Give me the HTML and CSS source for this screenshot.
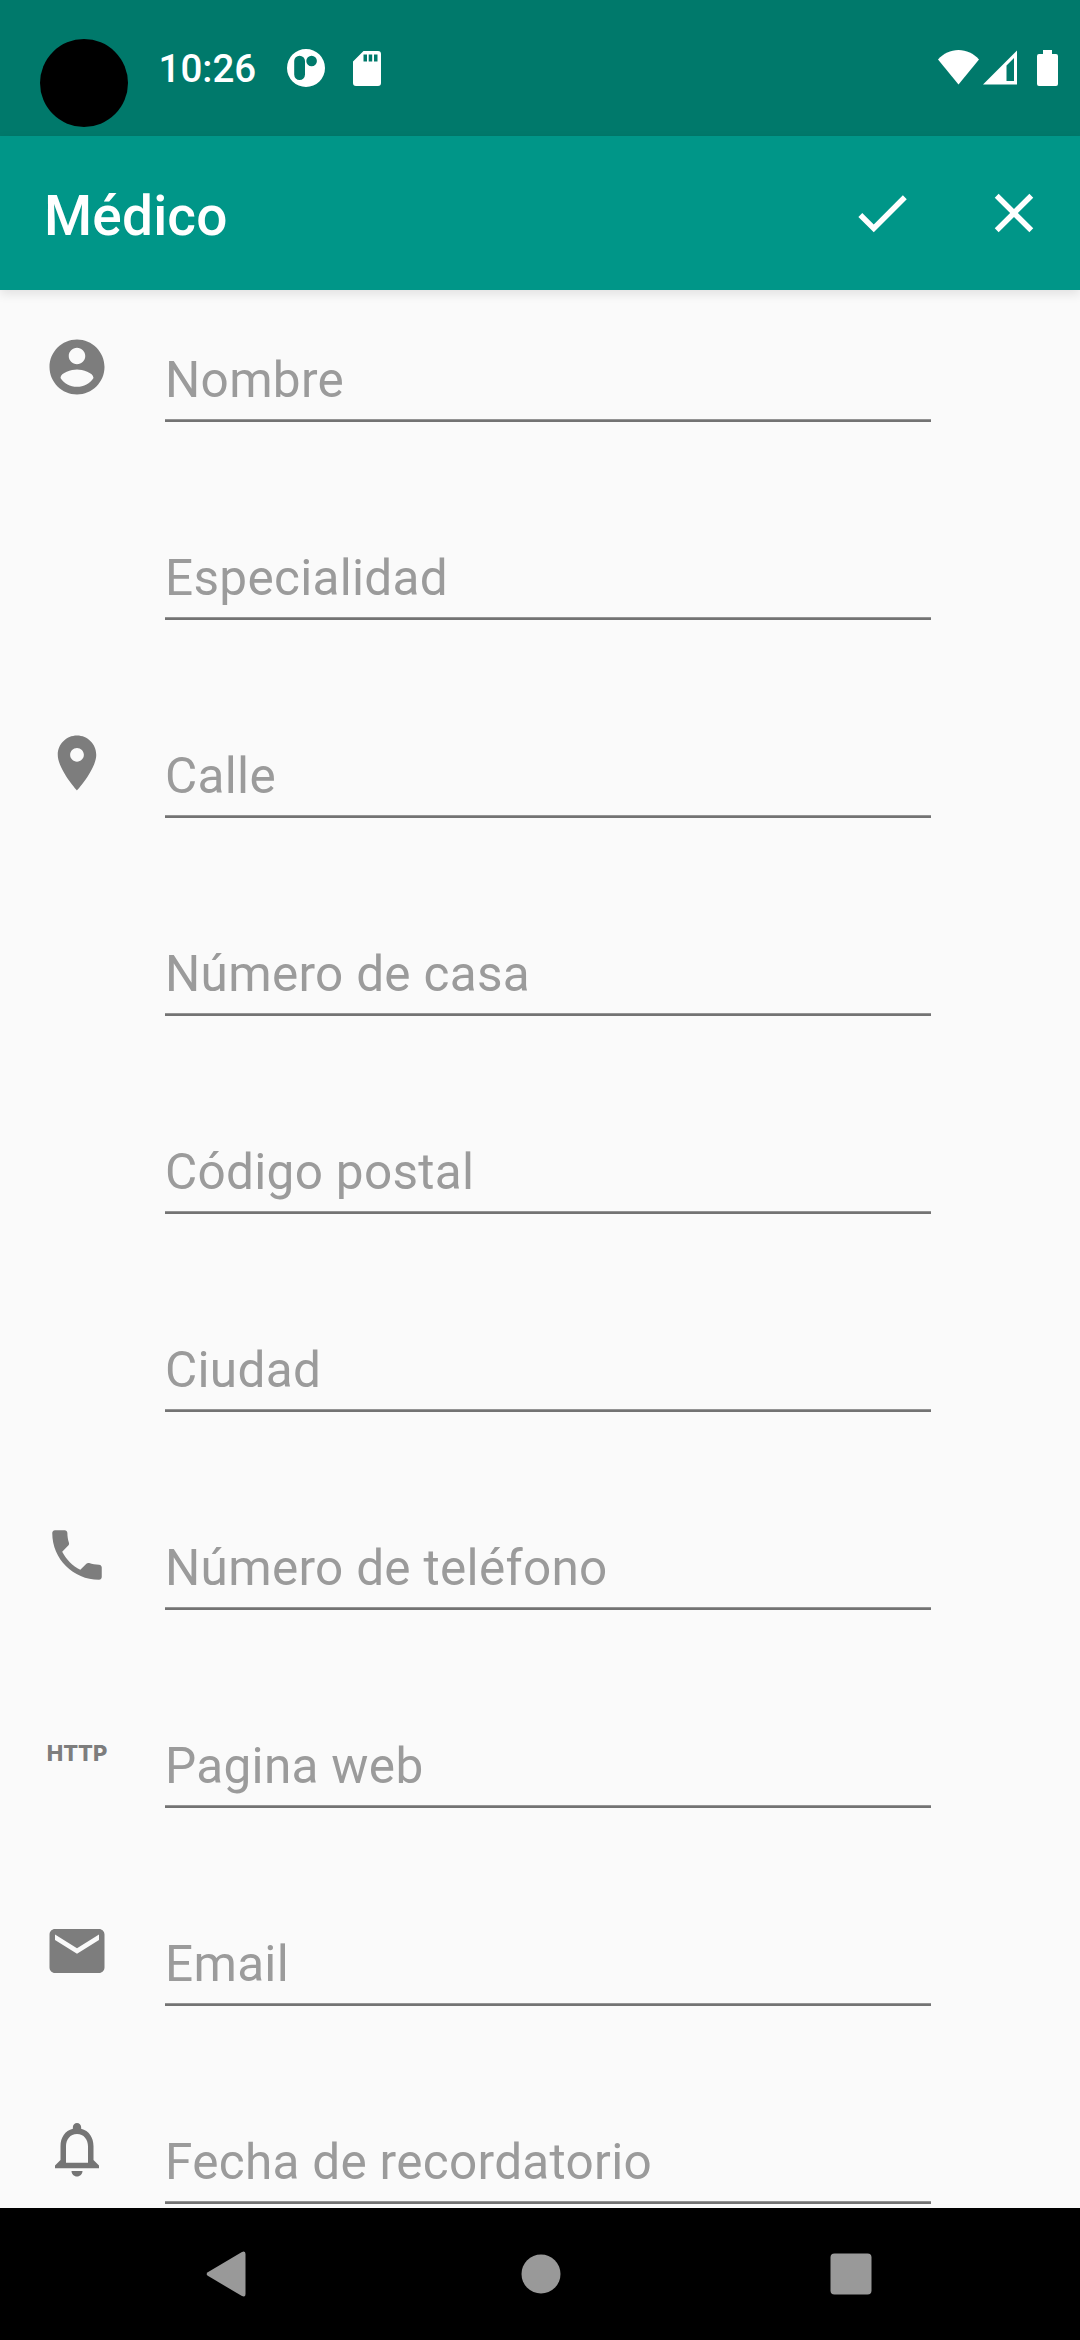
FILE: index.html
```html
<!DOCTYPE html>
<html lang="es">
<head>
<meta charset="utf-8">
<title>Médico</title>
<link rel="stylesheet" href="styles.css">
</head>
<body>
<div class="screen">
  <header class="status">
    <div class="camera"></div>
    <span class="clock">10:26</span>
    <svg class="s-app" width="38" height="38" viewBox="0 0 38 38"><path fill="#fff" fill-rule="evenodd" d="M19 0a19 19 0 1 0 0 38a19 19 0 1 0 0-38zM12.6 6.700a5.400 5.400 0 0 1 5.400 5.400v13.500a5.400 5.400 0 0 1-10.800 0v-13.500a5.400 5.400 0 0 1 5.400-5.400zM24.600 6.700a5.300 5.300 0 1 1 0 10.600a5.300 5.300 0 1 1 0-10.600z"/></svg>
    <svg class="s-sd" width="28" height="35" viewBox="0 0 28 35"><path fill="#fff" fill-rule="evenodd" d="M10.500 0H25a3 3 0 0 1 3 3V32a3 3 0 0 1-3 3H3a3 3 0 0 1-3-3V10.500zM10.500 3.500v7h3.500v-7zM15.700 3.500v7h3.500v-7zM21 3.500v7h3.500v-7z"/></svg>
    <span class="fill"></span>
    <svg class="s-wifi" width="41" height="35" viewBox="0 0 41 35"><path fill="#fff" d="M0 9.500C5.500 3.500 12.500 0 20.500 0S35.500 3.500 41 9.500L20.500 34.500z"/></svg>
    <svg class="s-cell" width="34" height="35" viewBox="0 0 34 35"><path fill="#fff" fill-rule="evenodd" d="M34 .5V34.500H0zM31 8L23.500 15.500V31H31z"/></svg>
    <svg class="s-batt" width="21" height="36" viewBox="0 0 21 36"><path fill="#fff" d="M6 0h9v4H19a2 2 0 0 1 2 2V34a2 2 0 0 1-2 2H2a2 2 0 0 1-2-2V6a2 2 0 0 1 2-2h4z"/></svg>
  </header>
  <div class="toolbar">
    <h1 class="title">Médico</h1>
    <svg class="action" viewBox="0 0 24 24"><path d="M9 16.170L4.830 12l-1.420 1.410L9 19 21 7l-1.410-1.410z"/></svg>
    <svg class="action" viewBox="0 0 24 24"><path d="M19 6.410L17.590 5 12 10.590 6.410 5 5 6.410 10.590 12 5 17.590 6.410 19 12 13.410 17.590 19 19 17.590 13.410 12z"/></svg>
  </div>
  <main class="form">
    <div class="row"><svg class="icon" viewBox="0 0 24 24"><path d="M12 2C6.480 2 2 6.480 2 12s4.480 10 10 10 10-4.480 10-10S17.520 2 12 2zm0 3c1.660 0 3 1.340 3 3s-1.340 3-3 3-3-1.340-3-3 1.340-3 3-3zm0 14.200c-2.500 0-4.710-1.280-6-3.220.030-1.990 4-3.080 6-3.080 1.990 0 5.970 1.090 6 3.080-1.290 1.940-3.500 3.220-6 3.220z"/></svg><div class="field"><span>Nombre</span></div></div>
    <div class="row"><span class="icon"></span><div class="field"><span>Especialidad</span></div></div>
    <div class="row"><svg class="icon" viewBox="0 0 24 24"><path d="M12 2C8.130 2 5 5.130 5 9c0 5.250 7 13 7 13s7-7.750 7-13c0-3.870-3.130-7-7-7zm0 9.500c-1.380 0-2.500-1.120-2.500-2.500s1.120-2.500 2.500-2.500 2.500 1.120 2.500 2.500-1.120 2.500-2.500 2.500z"/></svg><div class="field"><span>Calle</span></div></div>
    <div class="row"><span class="icon"></span><div class="field"><span>Número de casa</span></div></div>
    <div class="row"><span class="icon"></span><div class="field"><span>Código postal</span></div></div>
    <div class="row"><span class="icon"></span><div class="field"><span>Ciudad</span></div></div>
    <div class="row"><svg class="icon" viewBox="0 0 24 24"><path d="M6.620 10.790c1.440 2.830 3.760 5.140 6.590 6.590l2.200-2.200c.270-.270.670-.360 1.020-.240 1.120.370 2.330.570 3.570.570.550 0 1 .450 1 1V20c0 .550-.450 1-1 1-9.390 0-17-7.610-17-17 0-.550.450-1 1-1h3.500c.550 0 1 .450 1 1 0 1.250.200 2.450.570 3.570.110.350.030.740-.250 1.020l-2.200 2.200z"/></svg><div class="field"><span>Número de teléfono</span></div></div>
    <div class="row"><span class="icon http">HTTP</span><div class="field"><span>Pagina web</span></div></div>
    <div class="row"><svg class="icon" viewBox="0 0 24 24"><path d="M20 4H4c-1.100 0-1.990.900-1.990 2L2 18c0 1.100.900 2 2 2h16c1.100 0 2-.900 2-2V6c0-1.100-.900-2-2-2zm0 4l-8 5-8-5V6l8 5 8-5v2z"/></svg><div class="field"><span>Email</span></div></div>
    <div class="row"><svg class="icon bell" viewBox="0 0 24 24"><path d="M12 22c1.100 0 2-.900 2-2h-4c0 1.100.900 2 2 2zm6-6v-5c0-3.070-1.640-5.640-4.500-6.320V4c0-.830-.670-1.500-1.500-1.500s-1.500.670-1.500 1.500v.680C7.630 5.360 6 7.920 6 11v5l-2 2v1h16v-1l-2-2zm-2 1H8v-6c0-2.480 1.510-4.500 4-4.500s4 2.020 4 4.500v6z"/></svg><div class="field"><span>Fecha de recordatorio</span></div></div>
  </main>
  <nav class="nav">
    <svg width="40" height="46" viewBox="0 0 40 46"><path fill="#999" d="M35.500 1.200Q39.500 -1 39.500 3V43Q39.500 47 35.500 44.800L1.800 24.800Q-.5 23 1.800 21.200z"/></svg>
    <svg class="home" width="40" height="40" viewBox="0 0 40 40"><circle cx="20" cy="20" r="19.500" fill="#999"/></svg>
    <svg width="42" height="42" viewBox="0 0 42 42"><rect x=".5" y=".5" width="41" height="41" rx="4" fill="#999"/></svg>
  </nav>
</div>
</body>
</html>
```
FILE: styles.css
```css
* { box-sizing: border-box; }
body { margin: 0; font-family: Roboto, sans-serif; }
svg { display: block; flex: none; }
.screen {
  width: 1080px; height: 2340px; overflow: hidden;
  display: flex; flex-direction: column; background: #fafafa;
}
.status {
  height: 136px; flex: none; display: flex; align-items: flex-start;
  background: #00796b; padding: 0 22px 0 40px; color: #fff;
}
.camera { width: 88px; height: 88px; margin-top: 39px; border-radius: 50%; background: #000; }
.clock { margin: 46px 0 0 30.5px; width: 100.5px; font-size: 38.5px; font-weight: 500; line-height: 46px; }
.s-app { margin: 49px 0 0 28px; }
.s-sd { margin: 51px 0 0 28px; }
.fill { flex: 1; }
.s-wifi { margin-top: 50px; }
.s-cell { margin: 50px 0 0 3.5px; }
.s-batt { margin: 50px 0 0 20.3px; }
.toolbar {
  height: 154px; flex: none; display: flex; align-items: flex-start; gap: 66px;
  padding: 44px 33px 0 44px; background: #009688; z-index: 1;
  box-shadow: 0 4px 10px rgba(0,0,0,.1);
}
.title { margin: 4px 0 0; flex: 1; font-size: 55px; font-weight: 500; line-height: 64px; letter-spacing: .2px; color: #fff; }
.action { width: 66px; height: 66px; fill: #fff; }
.form { flex: 1; min-height: 0; overflow: hidden; padding-top: 22px; }
.row { height: 198px; display: flex; align-items: flex-start; }
.icon { width: 66px; height: 66px; flex: none; margin: 22px 55px 0 44px; fill: #7d7d7d; }
.bell { fill: #757575; }
.http { font-family: Inter, sans-serif; font-size: 22px; font-weight: 800; line-height: 66px; text-align: center; color: #7d7d7d; }
.field {
  width: 766px; height: 110px; display: flex; align-items: flex-end;
  padding-bottom: 11px; border-bottom: 2px solid #737373; box-shadow: inset 0 -1px #949494;
  font-size: 49.5px; line-height: 58px; letter-spacing: .3px; color: #9b9b9b; white-space: nowrap;
}
.nav {
  height: 132px; flex: none; display: flex; align-items: center; justify-content: space-between;
  padding: 0 208px 0 206px; background: #000;
}
.home { margin-left: 5px; }
```
